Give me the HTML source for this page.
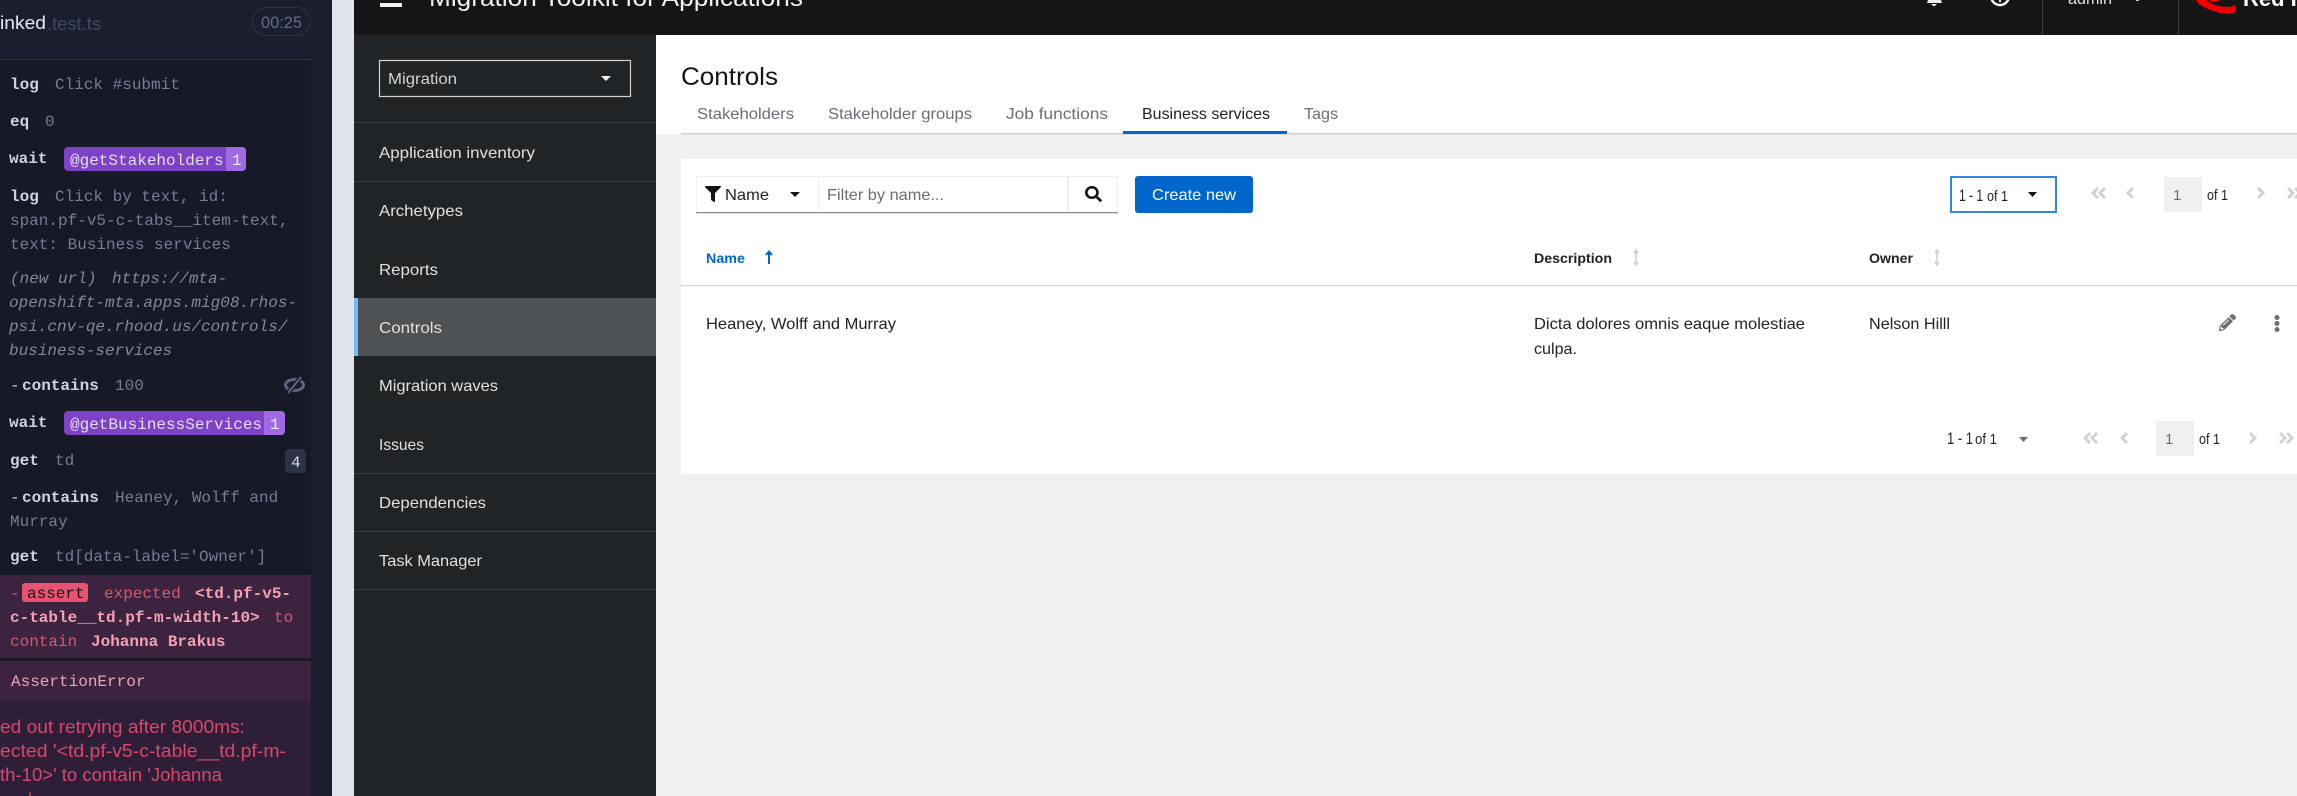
<!DOCTYPE html>
<html lang="en"><head><meta charset="utf-8"><title>Controls</title>
<style>
html,body{margin:0;padding:0;width:2297px;height:796px;overflow:hidden;background:#f0f0f0}
svg{display:block}
text{white-space:pre;font-family:"Liberation Sans",sans-serif;font-size:16px}
.m{font-family:"Liberation Mono",monospace;font-size:16px}
.k{fill:#cfd2e0;font-weight:bold}
.a{fill:#777c96}
.i{fill:#83879f;font-style:italic}
.n{fill:#e0e0e0}
.t{fill:#6a6e73}
.d{fill:#222}
.ch{fill:none;stroke:#d2d2d2;stroke-width:3}
</style></head><body>
<svg width="2297" height="796" viewBox="0 0 2297 796" xmlns="http://www.w3.org/2000/svg">
<!-- left panel -->
<rect x="0" y="0" width="332" height="796" fill="#1b1e2e"/>
<rect x="0" y="60" width="311" height="736" fill="#171926"/>
<rect x="0" y="59" width="311" height="1" fill="#2e3247"/>
<rect x="332" y="0" width="22" height="796" fill="#e1e3ed"/>
<text x="0" y="29" fill="#e8e9f0" style="font-size:18px" textLength="46" lengthAdjust="spacingAndGlyphs">inked</text>
<text x="47" y="30" fill="#434861" style="font-size:18px" textLength="54" lengthAdjust="spacingAndGlyphs">.test.ts</text>
<rect x="252.5" y="7.5" width="58" height="28" rx="14" fill="none" stroke="#2e3247"/>
<text x="261" y="28" fill="#666b85" style="font-size:17px" textLength="41" lengthAdjust="spacingAndGlyphs">00:25</text>

<text class="m k" x="10" y="89">log</text><text class="m a" x="55" y="89">Click #submit</text>
<text class="m k" x="10" y="126">eq</text><text class="m a" x="45" y="126">0</text>
<text class="m k" x="9" y="163">wait</text>
<rect x="64" y="147" width="182" height="24" rx="4" fill="#7d42c6"/>
<path d="M226 147h16a4 4 0 0 1 4 4v16a4 4 0 0 1-4 4h-16z" fill="#a06be2"/>
<text class="m" x="70" y="165" fill="#e6dcf5">@getStakeholders</text><text class="m" x="232" y="165" fill="#f0e8fb">1</text>
<text class="m k" x="10" y="201">log</text><text class="m a" x="55" y="201">Click by text, id:</text>
<text class="m a" x="10" y="225">span.pf-v5-c-tabs__item-text,</text>
<text class="m a" x="10" y="249">text: Business services</text>
<text class="m i" x="10" y="283">(new url)</text><text class="m i" x="112" y="283">https://mta-</text>
<text class="m i" x="9" y="307">openshift-mta.apps.mig08.rhos-</text>
<text class="m i" x="9" y="331">psi.cnv-qe.rhood.us/controls/</text>
<text class="m i" x="9" y="355">business-services</text>
<text class="m k" x="10" y="390" style="font-weight:normal">-</text><text class="m k" x="22" y="390">contains</text><text class="m a" x="115" y="390">100</text>
<ellipse cx="294.500" cy="385" rx="9" ry="5.500" fill="none" stroke="#5f6480" stroke-width="3"/>
<path d="M288 393l13-16" stroke="#171926" stroke-width="4.500" fill="none"/>
<path d="M288 393l13-16" stroke="#5f6480" stroke-width="2" fill="none"/>
<text class="m k" x="9" y="427">wait</text>
<rect x="64" y="411" width="221" height="24" rx="4" fill="#7d42c6"/>
<path d="M264 411h17a4 4 0 0 1 4 4v16a4 4 0 0 1-4 4h-17z" fill="#a06be2"/>
<text class="m" x="70" y="429" fill="#e6dcf5">@getBusinessServices</text><text class="m" x="270" y="429" fill="#f0e8fb">1</text>
<text class="m k" x="10" y="465">get</text><text class="m a" x="55" y="465">td</text>
<rect x="285" y="449" width="21" height="24" rx="4" fill="#2e3247"/><text class="m" x="291" y="467" fill="#d8dae6">4</text>
<text class="m k" x="10" y="502" style="font-weight:normal">-</text><text class="m k" x="22" y="502">contains</text><text class="m a" x="115" y="502">Heaney, Wolff and</text>
<text class="m a" x="10" y="526">Murray</text>
<text class="m k" x="10" y="561">get</text><text class="m a" x="55" y="561">td[data-label='Owner']</text>

<rect x="0" y="575" width="311" height="83" fill="#3c2440"/>
<rect x="0" y="661" width="311" height="40" fill="#3c2440"/>
<rect x="0" y="701" width="311" height="95" fill="#2f1e38"/>
<text class="m" x="10" y="598" fill="#d7566f">-</text>
<rect x="22" y="583" width="66" height="19" rx="3" fill="#e8546f"/>
<text class="m" x="27" y="598" fill="#12131c">assert</text>
<text class="m" x="104" y="598" fill="#d7566f">expected</text>
<text class="m" x="195" y="598" fill="#f4a0b2" font-weight="bold">&lt;td.pf-v5-</text>
<text class="m" x="10" y="622" fill="#f4a0b2" font-weight="bold">c-table__td.pf-m-width-10&gt;</text>
<text class="m" x="274" y="622" fill="#d7566f">to</text>
<text class="m" x="10" y="646" fill="#d7566f">contain</text>
<text class="m" x="91" y="646" fill="#f4a0b2" font-weight="bold">Johanna Brakus</text>
<text class="m" x="11" y="686" fill="#efa2b4">AssertionError</text>
<text x="0" y="733" fill="#d9476a" style="font-size:18px" textLength="245" lengthAdjust="spacingAndGlyphs">ed out retrying after 8000ms:</text>
<text x="0" y="757" fill="#d9476a" style="font-size:18px" textLength="286" lengthAdjust="spacingAndGlyphs">ected '&lt;td.pf-v5-c-table__td.pf-m-</text>
<text x="0" y="781" fill="#d9476a" style="font-size:18px" textLength="222" lengthAdjust="spacingAndGlyphs">th-10&gt;' to contain 'Johanna</text>
<text x="18" y="806" fill="#d9476a" style="font-size:18px">ak</text>

<!-- masthead -->
<rect x="354" y="0" width="1943" height="35" fill="#151515"/>
<rect x="380" y="3" width="22" height="4" fill="#f0f0f0"/>
<text x="429" y="6" fill="#f0f0f0" style="font-size:25px" textLength="374" lengthAdjust="spacingAndGlyphs">Migration Toolkit for Applications</text>
<path d="M1928 0h13l1 3h-15zM1931 4h6l-3 2.500z" fill="#f0f0f0"/>
<circle cx="2000" cy="-4" r="9" fill="none" stroke="#f0f0f0" stroke-width="2.500"/>
<rect x="1999" y="-1" width="2" height="3" fill="#f0f0f0"/>
<rect x="2042" y="0" width="1" height="35" fill="#3c3f42"/>
<text x="2068" y="4" fill="#e0e0e0" textLength="44" lengthAdjust="spacingAndGlyphs">admin</text>
<rect x="2136" y="0" width="3" height="1" fill="#d2d2d2"/>
<rect x="2178" y="0" width="1" height="35" fill="#3c3f42"/>
<path d="M2196 0C2199 8 2220 14 2230 14C2236 14 2237 9 2235 5C2231 8 2215 8 2207 0z" fill="#ee0000"/>
<path d="M2209 0h11q-3 2-6 2t-5-2z" fill="#ee0000"/>
<text x="2243" y="6" fill="#fff" style="font-size:22px;font-weight:bold">Red H</text>

<!-- sidebar -->
<rect x="354" y="35" width="302" height="761" fill="#212427"/>
<rect x="379.5" y="60.5" width="251" height="36" fill="none" stroke="#d2d2d2" stroke-width="1.2"/>
<text x="388" y="84" fill="#d2d2d2" textLength="69" lengthAdjust="spacingAndGlyphs">Migration</text>
<path d="M601 76h10l-5 5z" fill="#f0f0f0"/>
<g fill="#3c3f42"><rect x="354" y="122" width="302" height="1"/><rect x="354" y="181" width="302" height="1"/><rect x="354" y="473" width="302" height="1"/><rect x="354" y="531" width="302" height="1"/><rect x="354" y="589" width="302" height="1"/></g>
<rect x="354" y="298" width="302" height="58" fill="#4f5255"/>
<rect x="354" y="298" width="4" height="58" fill="#73bcf7"/>
<text class="n" x="379" y="158" textLength="156" lengthAdjust="spacingAndGlyphs">Application inventory</text>
<text class="n" x="379" y="216" textLength="84" lengthAdjust="spacingAndGlyphs">Archetypes</text>
<text class="n" x="379" y="275" textLength="59" lengthAdjust="spacingAndGlyphs">Reports</text>
<text class="n" x="379" y="333" textLength="63" lengthAdjust="spacingAndGlyphs">Controls</text>
<text class="n" x="379" y="391" textLength="119" lengthAdjust="spacingAndGlyphs">Migration waves</text>
<text class="n" x="379" y="450" textLength="45" lengthAdjust="spacingAndGlyphs">Issues</text>
<text class="n" x="379" y="508" textLength="107" lengthAdjust="spacingAndGlyphs">Dependencies</text>
<text class="n" x="379" y="566" textLength="103" lengthAdjust="spacingAndGlyphs">Task Manager</text>

<!-- page header -->
<rect x="656" y="35" width="1641" height="99" fill="#fff"/>
<rect x="681" y="133" width="1616" height="1.5" fill="#d2d2d2"/>
<text x="681" y="85" fill="#151515" style="font-size:25px" textLength="97" lengthAdjust="spacingAndGlyphs">Controls</text>
<text class="t" x="697" y="119" textLength="97" lengthAdjust="spacingAndGlyphs">Stakeholders</text>
<text class="t" x="828" y="119" textLength="144" lengthAdjust="spacingAndGlyphs">Stakeholder groups</text>
<text class="t" x="1006" y="119" textLength="102" lengthAdjust="spacingAndGlyphs">Job functions</text>
<text class="d" x="1142" y="119" textLength="128" lengthAdjust="spacingAndGlyphs">Business services</text>
<text class="t" x="1304" y="119" textLength="34" lengthAdjust="spacingAndGlyphs">Tags</text>
<rect x="1123" y="131" width="164" height="3" fill="#06c"/>

<!-- card -->
<rect x="681" y="159" width="1616" height="315" fill="#fff"/>
<g fill="none" stroke="#f0f0f0" stroke-width="1"><rect x="696.5" y="176.5" width="122" height="36"/><rect x="818.5" y="176.5" width="249" height="36"/><rect x="1068.5" y="176.5" width="49" height="36"/></g>
<rect x="696" y="212" width="422" height="1.3" fill="#8a8d90"/>
<svg x="705" y="186" width="16" height="16" viewBox="0 0 512 512"><path fill="#151515" d="M487.976 0H24.028C2.71 0-8.047 25.866 7.058 40.971L192 225.941V432c0 7.831 3.821 15.17 10.237 19.662l80 55.98C298.02 518.69 320 507.493 320 487.98V225.941l184.947-184.97C520.021 25.896 509.338 0 487.976 0z"/></svg>
<text class="d" x="725" y="200" textLength="44" lengthAdjust="spacingAndGlyphs">Name</text>
<path d="M790 192h10l-5 5z" fill="#151515"/>
<text class="t" x="827" y="200" textLength="117" lengthAdjust="spacingAndGlyphs">Filter by name...</text>
<svg x="1085" y="186" width="17" height="16" viewBox="0 0 512 512" preserveAspectRatio="none"><path fill="#151515" d="M505 442.7L405.3 343c-4.5-4.5-10.6-7-17-7H372c27.6-35.3 44-79.7 44-128C416 93.1 322.9 0 208 0S0 93.1 0 208s93.1 208 208 208c48.3 0 92.7-16.4 128-44v16.3c0 6.4 2.5 12.5 7 17l99.7 99.7c9.4 9.4 24.6 9.4 33.9 0l28.3-28.3c9.4-9.4 9.4-24.6.1-34zM208 336c-70.7 0-128-57.2-128-128 0-70.7 57.2-128 128-128 70.7 0 128 57.2 128 128 0 70.7-57.2 128-128 128z"/></svg>
<rect x="1135" y="176" width="118" height="37" rx="3" fill="#06c"/>
<text x="1152" y="200" fill="#fff" textLength="84" lengthAdjust="spacingAndGlyphs">Create new</text>

<rect x="1951" y="177" width="105" height="35" fill="none" stroke="#3584e4" stroke-width="2"/>
<text class="d" x="1959" y="201" style="font-size:17px" textLength="24" lengthAdjust="spacingAndGlyphs">1 - 1</text>
<text class="d" x="1987" y="201" style="font-size:15px" textLength="21" lengthAdjust="spacingAndGlyphs">of 1</text>
<path d="M2028 192h9l-4.500 5z" fill="#151515"/>
<path class="ch" d="M2098 188l-5 5 5 5M2105 188l-5 5 5 5"/>
<path class="ch" d="M2133 188l-5 5 5 5"/>
<path class="ch" d="M2258 188l5 5-5 5"/>
<path class="ch" d="M2288 188l5 5-5 5M2295 188l5 5-5 5"/>
<rect x="2164" y="177" width="38" height="35" fill="#f0f0f0"/>
<text class="t" x="2173" y="200" style="font-size:15px">1</text>
<text class="d" x="2207" y="200" style="font-size:15px" textLength="21" lengthAdjust="spacingAndGlyphs">of 1</text>

<!-- table -->
<text x="706" y="263" fill="#06c" style="font-size:14px;font-weight:bold" textLength="39" lengthAdjust="spacingAndGlyphs">Name</text>
<path d="M769 264v-12M766 255l3-3.500 3 3.500" fill="none" stroke="#06c" stroke-width="2"/>
<text class="d" x="1534" y="263" style="font-size:14px;font-weight:bold" textLength="78" lengthAdjust="spacingAndGlyphs">Description</text>
<path d="M1636 250v15M1634 253l2-3 2 3M1634 262l2 3 2-3" fill="none" stroke="#d2d2d2" stroke-width="1.6"/>
<text class="d" x="1869" y="263" style="font-size:14px;font-weight:bold" textLength="44" lengthAdjust="spacingAndGlyphs">Owner</text>
<path d="M1937 250v15M1935 253l2-3 2 3M1935 262l2 3 2-3" fill="none" stroke="#d2d2d2" stroke-width="1.6"/>
<rect x="681" y="285" width="1616" height="1.2" fill="#d2d2d2"/>
<text class="d" x="706" y="329" textLength="190" lengthAdjust="spacingAndGlyphs">Heaney, Wolff and Murray</text>
<text class="d" x="1534" y="329" textLength="271" lengthAdjust="spacingAndGlyphs">Dicta dolores omnis eaque molestiae</text>
<text class="d" x="1534" y="354" textLength="43" lengthAdjust="spacingAndGlyphs">culpa.</text>
<text class="d" x="1869" y="329" textLength="81" lengthAdjust="spacingAndGlyphs">Nelson Hilll</text>
<svg x="2219" y="314" width="17" height="17" viewBox="0 0 512 512"><path fill="#6a6e73" fill-rule="evenodd" d="M497.9 142.1l-46.1 46.1c-4.7 4.7-12.3 4.7-17 0l-111-111c-4.700-4.700-4.700-12.300 0-17l46.100-46.100c18.700-18.700 49.100-18.700 67.900 0l60.100 60.100c18.800 18.700 18.800 49.100 0 67.900zM284.200 99.800L21.600 362.400.4 483.900c-2.900 16.400 11.400 30.600 27.800 27.800l121.500-21.300 262.600-262.600c4.700-4.700 4.700-12.300 0-17l-111-111c-4.800-4.700-12.400-4.700-17.100 0zM124.100 339.900c-5.500-5.500-5.500-14.300 0-19.800l154-154c5.500-5.500 14.300-5.500 19.800 0s5.500 14.300 0 19.800l-154 154c-5.500 5.500-14.300 5.500-19.800 0zM88 424h48v36.300l-64.500 11.300-31.100-31.100L51.700 376H88v48z"/></svg>
<g fill="#6a6e73"><circle cx="2277" cy="317.500" r="2.500"/><circle cx="2277" cy="323.500" r="2.500"/><circle cx="2277" cy="329.500" r="2.500"/></g>

<text class="d" x="1947" y="444" style="font-size:17px" textLength="26" lengthAdjust="spacingAndGlyphs">1 - 1</text>
<text class="d" x="1975" y="444" style="font-size:15px" textLength="22" lengthAdjust="spacingAndGlyphs">of 1</text>
<path d="M2019 437h9l-4.500 5z" fill="#6a6e73"/>
<path class="ch" d="M2090 433l-5 5 5 5M2097 433l-5 5 5 5"/>
<path class="ch" d="M2127 433l-5 5 5 5"/>
<rect x="2156" y="421" width="38" height="35" fill="#f0f0f0"/>
<text class="t" x="2165" y="444" style="font-size:15px">1</text>
<text class="d" x="2199" y="444" style="font-size:15px" textLength="21" lengthAdjust="spacingAndGlyphs">of 1</text>
<path class="ch" d="M2250 433l5 5-5 5"/>
<path class="ch" d="M2280 433l5 5-5 5M2287 433l5 5-5 5"/>
</svg>
</body></html>
